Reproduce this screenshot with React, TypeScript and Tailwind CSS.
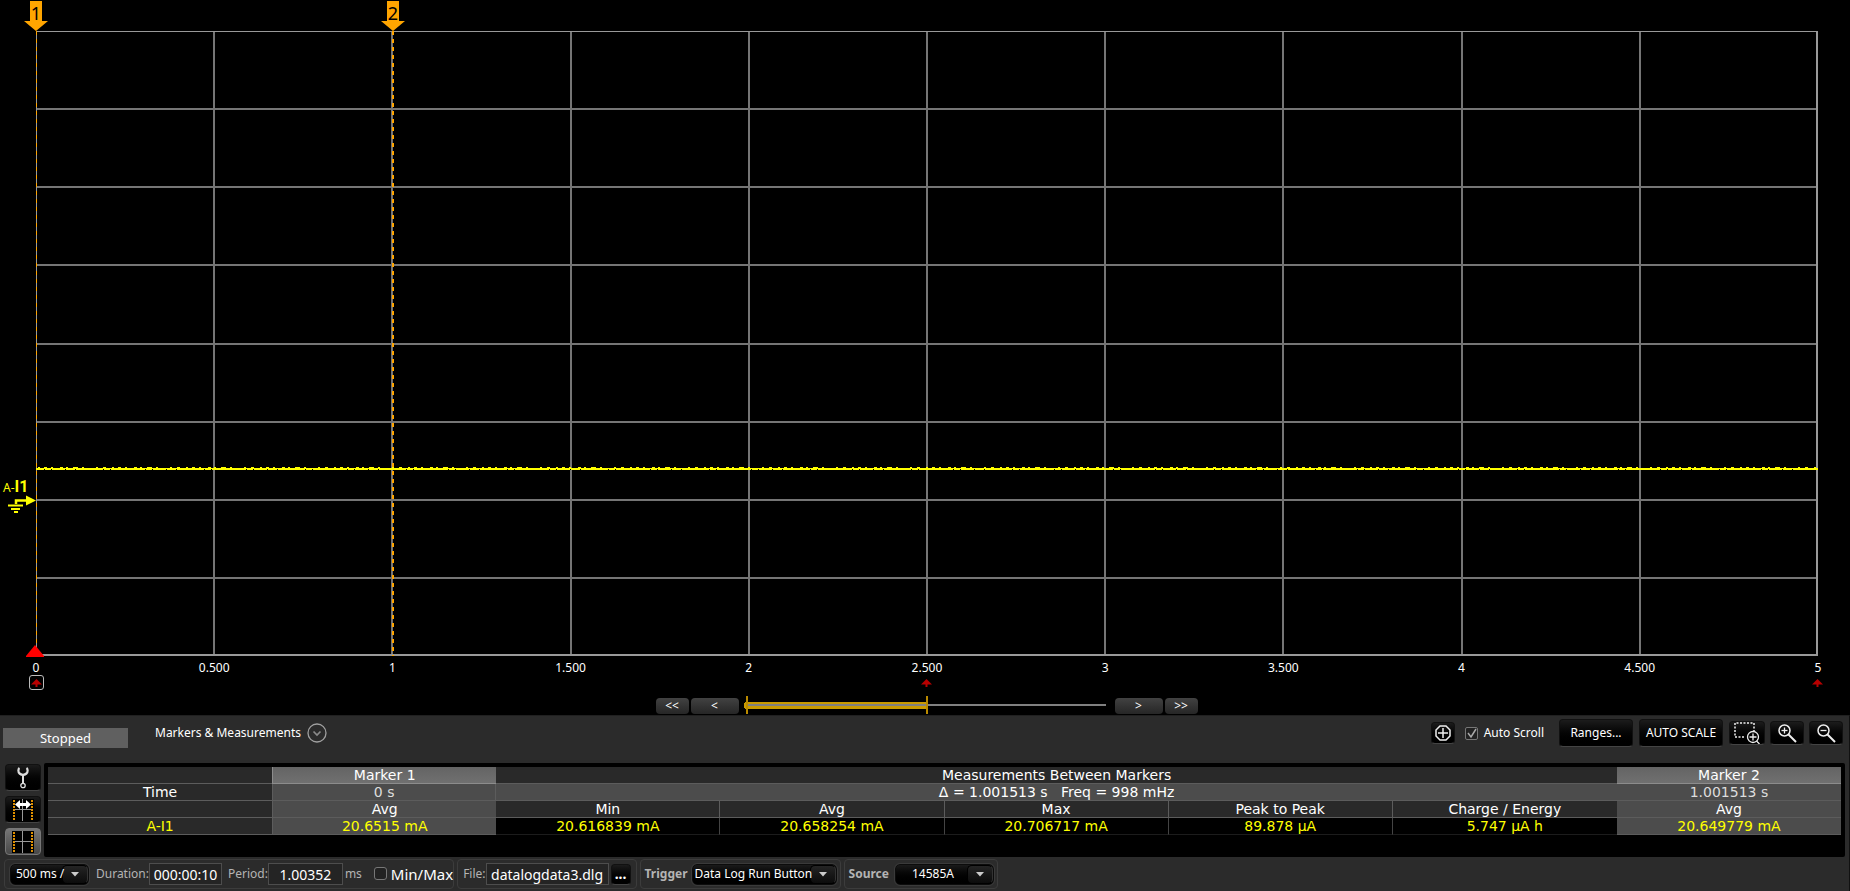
import React from "react";

const TICKS = ["0", "0.500", "1", "1.500", "2", "2.500", "3", "3.500", "4", "4.500", "5"];

const darkButton =
  "flex items-center justify-center rounded border border-[#111] border-b-[#444] bg-linear-to-b from-[#1c1c1c] to-black text-white";
const navButton =
  "flex h-4 items-center justify-center rounded-sm bg-linear-to-b from-[#424242] to-[#262626] text-xs leading-4 text-white";
const field = "h-[22px] border border-[#4d4d4d] bg-[#242424] text-center text-sm text-white";
const group = "flex h-[30px] items-center rounded-sm border border-[#3c3c3c] bg-[#2b2b2b]";

function MarkerFlag({ label, className }: { label: string; className: string }) {
  return (
    <div className={`absolute -top-[30px] h-[30px] w-6 -translate-x-1/2 ${className}`}>
      <svg className="absolute inset-0" width="24" height="30" viewBox="0 0 24 30">
        <path d="M6 0h12v20h6L12 30 0 20h6z" fill="#ffa500" />
      </svg>
      <span className="relative block text-center text-lg leading-6 text-black">{label}</span>
    </div>
  );
}

function Plot() {
  return (
    <div className="relative mr-8 ml-9 min-h-0 flex-1">
      <svg className="absolute inset-0 h-full w-full overflow-visible" shapeRendering="crispEdges">
        {[1, 2, 3, 4, 5, 6, 7].map((k) => (
          <line key={k} x1="0" x2="100%" y1={`${k * 12.5}%`} y2={`${k * 12.5}%`} stroke="#757575" strokeWidth="2" />
        ))}
        {[1, 2, 3, 4, 5, 6, 7, 8, 9].map((k) => (
          <line key={k} y1="0" y2="100%" x1={`${k * 10}%`} x2={`${k * 10}%`} stroke="#757575" strokeWidth="2" />
        ))}
      </svg>
      <div className="absolute inset-0 border-t border-r-2 border-b-2 border-l border-[#999]" />
      <svg className="absolute inset-0 h-full w-full overflow-visible" shapeRendering="crispEdges">
        <svg x="0" y="70%" width="100%" height="4" overflow="visible">
          <line x1="0" x2="100%" y1="0" y2="0" stroke="#ffff00" strokeWidth="2" />
          <line x1="2" x2="100%" y1="-1.5" y2="-1.5" stroke="#ffff00" strokeWidth="1" strokeDasharray="2 4 3 4 2 7 3 3 2 5 5 4 2 12 2 5 3 6" />
          <line x1="8" x2="100%" y1="0.5" y2="0.5" stroke="#000" strokeWidth="1" strokeDasharray="1 6 1 13 1 9 1 27 1 6 1 34" />
        </svg>
        <line x1="0.5" x2="0.5" y1="0" y2="100%" stroke="#ffa500" strokeWidth="1" strokeDasharray="4 4" />
        <line x1="20.03%" x2="20.03%" y1="0" y2="100%" stroke="#ffa500" strokeWidth="2" strokeDasharray="4 4" />
      </svg>
      <MarkerFlag label="1" className="left-0" />
      <MarkerFlag label="2" className="left-[20.03%]" />
      <div className="absolute top-[75%] -left-[34px] flex w-[34px] -translate-y-[21px] flex-col gap-[3px] text-[#ffff00]">
        <span className="flex h-4 items-baseline pl-px text-xs leading-4">
          A-<b className="font-[Roboto,sans-serif] text-base leading-4">I1</b>
        </span>
        <svg className="overflow-visible" width="34" height="16" viewBox="0 0 34 16" fill="none" stroke="currentColor">
          <path d="M14 6V2.500h11" strokeWidth="2.500" />
          <path d="M24 -2.500 34 2.500 24 7.500z" fill="currentColor" stroke="none" />
          <path d="M6 7.500h15M9 11h9M12 14h4" strokeWidth="2" />
        </svg>
      </div>
      <svg className="absolute -bottom-px -left-2.5" width="18" height="12" viewBox="0 0 18 12">
        <path d="M9 0 18 11v1H0v-1z" fill="#f00" />
      </svg>
    </div>
  );
}

function RedArrow() {
  return (
    <svg className="shrink-0" width="11" height="8" viewBox="0 0 11 8">
      <path d="M5.500 0 11 5.500H0z" fill="#b80000" />
      <path d="M4.500 5h2v3h-2z" fill="#b80000" />
    </svg>
  );
}

function TimeAxis() {
  return (
    <div className="mr-8 ml-9 flex justify-between text-xs text-white">
      {TICKS.map((t, i) => (
        <div key={t} className="flex w-0 flex-col items-center">
          <span className="pt-1 text-center leading-[15px]">{t}</span>
          <span
            className={
              i === 0
                ? "flex h-[15px] w-[15px] items-center justify-center rounded-[3px] border border-[#bbb]"
                : "flex h-[15px] w-[15px] items-center justify-center"
            }
          >
            {i % 5 === 0 && <RedArrow />}
          </span>
        </div>
      ))}
    </div>
  );
}

function ScrollBar() {
  return (
    <div className="mt-2 flex h-[17px] items-start justify-center pl-[3px]">
      <button className={`${navButton} w-[33px]`} aria-label="First">&lt;&lt;</button>
      <button className={`${navButton} ml-0.5 w-12`} aria-label="Back">&lt;</button>
      <svg className="mx-[3px] h-[18px] w-[366px] overflow-visible" shapeRendering="crispEdges" aria-hidden="true">
        <rect x="2" y="4" width="184" height="7" rx="3" fill="#c99a00" />
        <rect x="4" y="6" width="360" height="2" fill="#808080" />
        <rect x="4" y="-2" width="2" height="18" fill="#b98a00" />
        <rect x="184" y="-2" width="2" height="18" fill="#b98a00" />
      </svg>
      <button className={`${navButton} ml-1 w-12`} aria-label="Forward">&gt;</button>
      <button className={`${navButton} ml-0.5 w-[33px]`} aria-label="Last">&gt;&gt;</button>
    </div>
  );
}

function Magnifier({ minus }: { minus?: boolean }) {
  return (
    <svg width="20" height="20" viewBox="0 0 20 20" fill="none" stroke="#eee">
      <circle cx="7.500" cy="7.500" r="5.500" strokeWidth="1.500" />
      <path d="M4.500 7.500h6" strokeWidth="1.300" />
      {!minus && <path d="M7.500 4.500v6" strokeWidth="1.300" />}
      <path d="M11.500 11.500 19 19" strokeWidth="2" />
    </svg>
  );
}

function Tick() {
  return (
    <svg className="pointer-events-none absolute inset-0" width="13" height="13" viewBox="0 0 13 13" fill="none" stroke="#aaa" strokeWidth="1.500">
      <path d="M3 6l3 4 5-8" />
    </svg>
  );
}

function ControlRow() {
  return (
    <div className="flex h-[47px] items-start pt-[3px] pr-1.5 pl-[3px] text-xs text-white">
      <div className="mt-[9px] h-5 w-[125px] bg-[#606060] text-center text-[13px] leading-5">Stopped</div>
      <button className="ml-[27px] flex h-7 items-center gap-1.5 text-xs">
        Markers &amp; Measurements
        <svg width="20" height="20" viewBox="0 0 20 20" fill="none">
          <circle cx="10" cy="10" r="9" stroke="#a0a0a0" strokeWidth="1.300" />
          <path d="M6.500 8.500 10 12l3.500-3.500" stroke="#8a8a8a" strokeWidth="1.700" />
        </svg>
      </button>
      <div className="ml-auto flex h-7 items-center">
        <button className={`${darkButton} h-[22px] w-6`} aria-label="Center">
          <svg width="16" height="16" viewBox="0 0 16 16" fill="none" stroke="#eee" strokeWidth="1.500">
            <path d="M5 1h6l4 4v6l-4 4H5l-4-4V5zM8 3v10M3 8h10" />
          </svg>
        </button>
        <label className="ml-2.5 flex items-center gap-1.5">
          <span className="relative h-[13px] w-[13px]">
            <input type="checkbox" defaultChecked className="block h-[13px] w-[13px] appearance-none rounded-xs border border-[#777] bg-[#222]" />
            <Tick />
          </span>
          Auto Scroll
        </label>
        <button className={`${darkButton} ml-[15px] h-7 w-[74px]`}>Ranges...</button>
        <button className={`${darkButton} ml-1.5 h-7 w-[84px] whitespace-nowrap`}>AUTO SCALE</button>
        <button className={`${darkButton} ml-1.5 h-6 w-9`} aria-label="Zoom to area">
          <svg width="26" height="22" viewBox="0 0 26 22" fill="none" stroke="#eee">
            <path d="M10 15H1V1h19v8" strokeWidth="1.500" strokeDasharray="2 1.500" />
            <circle cx="19" cy="15" r="5.500" strokeWidth="1.300" />
            <path d="M19 11.500v7M15.500 15h7M22.500 19l3 3" strokeWidth="1.300" />
          </svg>
        </button>
        <button className={`${darkButton} ml-[5px] h-6 w-[34px]`} aria-label="Zoom in"><Magnifier /></button>
        <button className={`${darkButton} ml-[5px] h-6 w-[34px]`} aria-label="Zoom out"><Magnifier minus /></button>
      </div>
    </div>
  );
}

function MarkerGlyph({ arrows }: { arrows?: boolean }) {
  return (
    <svg width="22" height="22" viewBox="0 0 22 22" fill="none">
      <rect width="22" height="22" fill="#000" />
      <path d="M10.500 0v22M2 10.500h18" stroke="#999" strokeWidth="1" shapeRendering="crispEdges" />
      <path d="M2 1v20M20 1v20" stroke="#e09000" strokeWidth="2" strokeDasharray="2 1" shapeRendering="crispEdges" />
      {arrows && <path d="M3 5.500 8 1v3h6V1l5 4.500-5 4.500V7H8v3z" fill="#fff" />}
    </svg>
  );
}

function SideButtons() {
  return (
    <div className="flex w-9 flex-col gap-[5px] pt-px">
      <button className={`${darkButton} h-[27px]`} aria-label="Settings">
        <svg width="14" height="22" viewBox="0 0 14 22" fill="none" stroke="#ddd">
          <path d="M3.500 1C2 2 2 5 3.500 6.500 5.500 8 8.500 8 10.500 6.500 12 5 12 2 10.500 1" strokeWidth="2.200" />
          <path d="M7 7v10" strokeWidth="2" />
          <circle cx="7" cy="18.500" r="2.200" strokeWidth="1.300" />
        </svg>
      </button>
      <button className={`${darkButton} h-[27px]`} aria-label="Move markers"><MarkerGlyph arrows /></button>
      <button className="flex h-[27px] items-center justify-center rounded border border-[#777] bg-linear-to-b from-[#777] to-[#484848]" aria-label="Show markers">
        <MarkerGlyph />
      </button>
    </div>
  );
}

const line = "border-b border-[#5c5c5c] font-normal";
const dim = `${line} bg-[#292929]`;
const grey = `${line} bg-[#4c4c4c]`;
const head = "border-b border-[#8c8c8c] bg-linear-to-b from-[#646464] to-[#707070] font-normal";
const value = "border-b border-[#1c1c1c] border-r-[#444] bg-black";

function MeasurementTable() {
  return (
    <div className="flex-1 rounded-xs bg-black px-1 pt-1 pb-[22px]">
      <table className="w-full table-fixed border-separate border-spacing-0 text-center font-['DejaVu_Sans',sans-serif] text-sm leading-4 text-white">
        <tbody>
          <tr>
            <td className={dim} />
            <th className={`${head} border-l`}>Marker 1</th>
            <th colSpan={5} className={dim}>Measurements Between Markers</th>
            <th className={head}>Marker 2</th>
          </tr>
          <tr>
            <th className={dim}>Time</th>
            <td className={`${grey} border-r border-l text-[#ddd]`}>0 s</td>
            <td colSpan={5} className={`${grey} whitespace-pre`}>{"Δ = 1.001513 s   Freq = 998 mHz"}</td>
            <td className={`${grey} text-[#ddd]`}>1.001513 s</td>
          </tr>
          <tr>
            <td className={dim} />
            <th className={`${grey} border-l`}>Avg</th>
            <th className={`${dim} border-r`}>Min</th>
            <th className={`${dim} border-r`}>Avg</th>
            <th className={`${dim} border-r`}>Max</th>
            <th className={`${dim} border-r`}>Peak to Peak</th>
            <th className={dim}>Charge / Energy</th>
            <th className={grey}>Avg</th>
          </tr>
          <tr className="text-[#ffff00]">
            <th className={dim}>A-I1</th>
            <td className={`${grey} border-l`}>20.6515 mA</td>
            <td className={`${value} border-r`}>20.616839 mA</td>
            <td className={`${value} border-r`}>20.658254 mA</td>
            <td className={`${value} border-r`}>20.706717 mA</td>
            <td className={`${value} border-r`}>89.878 µA</td>
            <td className={value}>5.747 µA h</td>
            <td className={grey}>20.649779 mA</td>
          </tr>
        </tbody>
      </table>
    </div>
  );
}

function DropDown({ label, text, className }: { label: string; text: string; className: string }) {
  return (
    <span className="relative flex rounded-[5px] border border-[#0c0c0c] bg-linear-to-b from-[#1a1a1a] to-black outline outline-[#3a3a3a]">
      <span className="absolute inset-y-0 right-0 flex w-[26px] items-center justify-center rounded-[5px] border border-black border-r-[#333] bg-linear-to-b from-[#242424] to-[#0c0c0c]">
        <svg width="8" height="5" viewBox="0 0 8 5"><path d="M0 0h8L4 4.500z" fill="#ccc" /></svg>
      </span>
      <select aria-label={label} className={`relative h-[19px] appearance-none bg-transparent text-xs text-white ${className}`}>
        <option>{text}</option>
      </select>
    </span>
  );
}

function BottomBar() {
  return (
    <div className="mt-0.5 flex gap-[3px] pb-0.5 pl-1 text-xs whitespace-nowrap text-[#b4b4b4]">
      <div className={`${group} pl-[5px]`}>
        <DropDown label="Time per division" text="500 ms /" className="w-[77px] pl-[5px]" />
        <label htmlFor="duration" className="ml-[7px]">Duration:</label>
        <input id="duration" defaultValue="000:00:10" className={`${field} w-[73px]`} />
        <label htmlFor="period" className="ml-1.5">Period:</label>
        <input id="period" defaultValue="1.00352" className={`${field} w-[75px]`} />
        <span className="ml-0.5">ms</span>
        <label className="ml-3 flex items-center gap-1 text-[15px] text-white">
          <input type="checkbox" className="h-[13px] w-[13px] appearance-none rounded-[3px] border border-[#777] bg-[#222]" />
          Min/Max
        </label>
      </div>
      <div className={`${group} pr-[5px] pl-[5px]`}>
        <label htmlFor="file">File:</label>
        <input id="file" defaultValue="datalogdata3.dlg" className={`${field} w-[123px]`} />
        <button className={`${darkButton} ml-0.5 h-[21px] w-5 text-sm font-bold`} aria-label="Browse">...</button>
      </div>
      <div className={`${group} pr-[3px] pl-1`}>
        <b className="mr-1">Trigger</b>
        <DropDown label="Trigger" text="Data Log Run Button" className="w-[143px] pl-0.5" />
      </div>
      <div className={`${group} pr-[3px] pl-1`}>
        <b className="mr-1.5">Source</b>
        <DropDown label="Source" text="14585A" className="w-[97px] pl-4" />
      </div>
    </div>
  );
}

export default function App() {
  return (
    <main className="flex h-screen min-h-[500px] flex-col overflow-hidden bg-black pt-[31px] font-['Noto_Sans',sans-serif]">
      <Plot />
      <TimeAxis />
      <ScrollBar />
      <section className="border-t border-r border-t-[#202020] border-r-[#111] bg-[#2b2b2b]">
        <ControlRow />
        <div className="flex gap-[3px] pr-1 pl-[5px]">
          <SideButtons />
          <MeasurementTable />
        </div>
        <BottomBar />
      </section>
    </main>
  );
}
